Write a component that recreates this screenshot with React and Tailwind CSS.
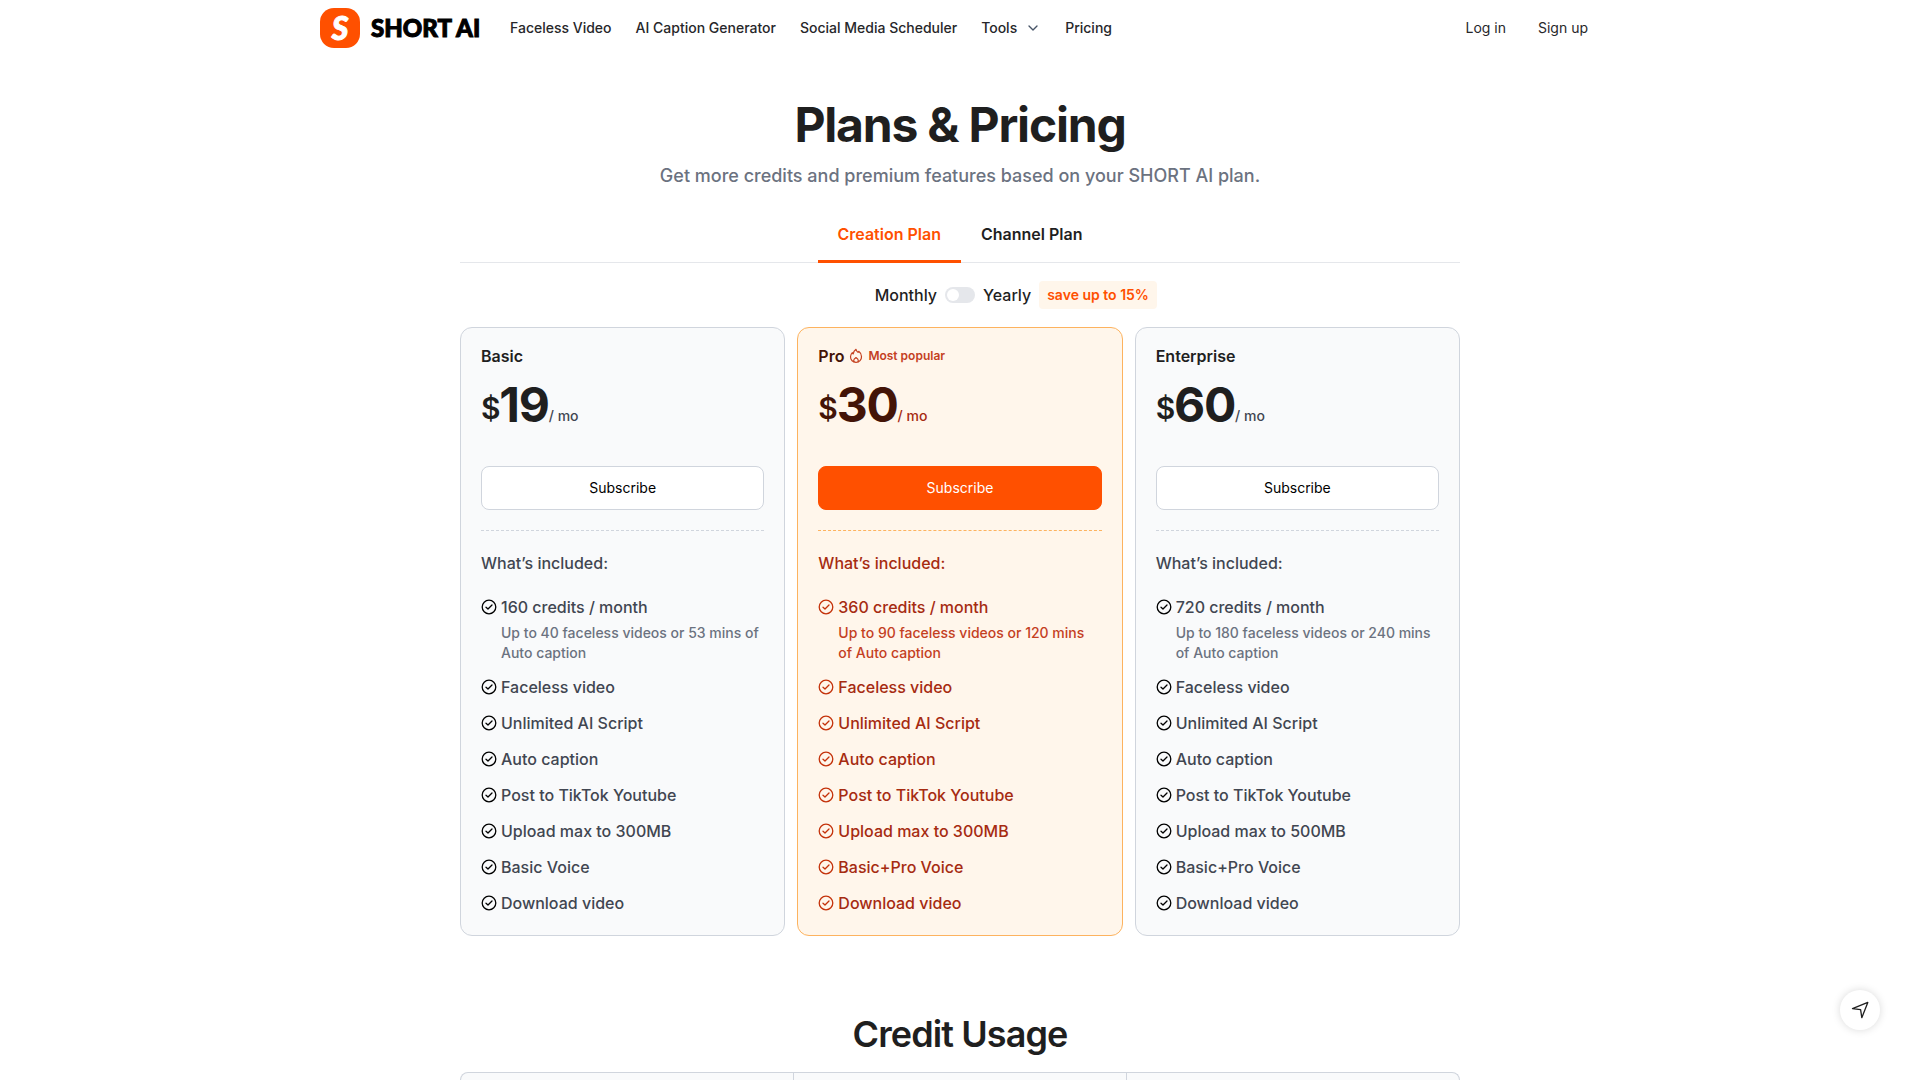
import { ChevronDown } from "lucide-react";

const navLinks = ["Faceless Video", "AI Caption Generator", "Social Media Scheduler"];

const plans = [
  {
    name: "Basic",
    price: 19,
    credits: "160 credits / month",
    note: "Up to 40 faceless videos or 53 mins of Auto caption",
    upload: "Upload max to 300MB",
    voice: "Basic Voice",
  },
  {
    name: "Pro",
    price: 30,
    popular: true,
    credits: "360 credits / month",
    note: "Up to 90 faceless videos or 120 mins of Auto caption",
    upload: "Upload max to 300MB",
    voice: "Basic+Pro Voice",
  },
  {
    name: "Enterprise",
    price: 60,
    credits: "720 credits / month",
    note: "Up to 180 faceless videos or 240 mins of Auto caption",
    upload: "Upload max to 500MB",
    voice: "Basic+Pro Voice",
  },
];

function CheckIcon({ className }) {
  return (
    <svg viewBox="0 0 16 16" fill="none" stroke="currentColor" className={className} aria-hidden="true">
      <circle cx="8" cy="8" r="6.8" strokeWidth="1.3" />
      <path d="M5 8.2 7 10l4-4" strokeWidth="1.3" strokeLinecap="round" strokeLinejoin="round" />
    </svg>
  );
}

function FlameIcon() {
  return (
    <svg
      viewBox="0 0 16 16"
      fill="none"
      stroke="currentColor"
      strokeWidth="1.2"
      strokeLinejoin="round"
      className="size-4"
      aria-hidden="true"
    >
      <path d="M8 1.300c.3 1.400 1 2.300 2 3.100.3-.4.6-.7.700-1.100 1.900 1.400 2.800 3.200 2.800 5.200A5.500 5.500 0 0 1 8 14.400 5.500 5.500 0 0 1 2.500 8.800c0-1.700.7-3.100 1.800-4.200.2.600.5 1 .9 1.300C5.500 4.200 6.400 2.400 8 1.300Z" />
      <path d="M6.300 14.100c-.4-.5-.6-1-.6-1.600 0-1.200.9-2.100 2.300-3 1.400.9 2.300 1.800 2.300 3 0 .6-.2 1.100-.6 1.600" />
    </svg>
  );
}

function Logo() {
  return (
    <a href="#home" className="flex items-center gap-[11px]">
      <span className="flex size-10 items-center justify-center rounded-[14px] bg-[#ff5000] font-['Lato',sans-serif] text-[32px] leading-10 font-black text-white italic [-webkit-text-stroke:1px_white]">
        S
      </span>
      <span className="w-[112px] font-['Lato',sans-serif] text-2xl font-black whitespace-nowrap text-black [-webkit-text-stroke:1px_black]">
        SHORT AI
      </span>
    </a>
  );
}

function Header() {
  return (
    <header className="mx-auto flex h-14 w-full max-w-[1280px] items-center text-sm text-[#27272a]">
      <Logo />
      <nav className="ml-[27px] flex items-center gap-6 font-medium">
        {navLinks.map((label) => (
          <a key={label} href="#features">
            {label}
          </a>
        ))}
        <button type="button" className="flex items-center gap-2">
          Tools
          <ChevronDown className="size-4 text-[#475467]" />
        </button>
        <a href="#pricing">Pricing</a>
      </nav>
      <div className="ml-auto flex items-center gap-8 pr-3">
        <a href="#login">Log in</a>
        <a href="#signup">Sign up</a>
      </div>
    </header>
  );
}

function PlanCard({ plan }) {
  const { popular } = plan;
  const body = popular ? "text-[#a62b11]" : "text-[#414651]";
  const line = popular ? "border-[#fdb35f]" : "border-[#d0d5dd]";
  const features = [
    "Faceless video",
    "Unlimited AI Script",
    "Auto caption",
    "Post to TikTok Youtube",
    plan.upload,
    plan.voice,
    "Download video",
  ];
  const check = popular ? "size-4 shrink-0 text-[#c4320a]" : "size-4 shrink-0 text-black";

  return (
    <article
      className={`rounded-xl border px-5 pt-4 pb-5 ${line} ${
        popular ? "bg-[#fff6eb] text-[#431407]" : "bg-[#f9fafb] text-[#1f1f1f]"
      }`}
    >
      <div className="flex items-center gap-1">
        <h2 className="text-base font-semibold">{plan.name}</h2>
        {popular && (
          <span className="flex items-center gap-1 text-xs font-semibold text-[#c4401f]">
            <FlameIcon />
            Most popular
          </span>
        )}
      </div>
      <p className="mt-3 flex items-end text-5xl leading-[50px] font-bold tracking-tight">
        <span className="text-3xl leading-11 font-semibold">$</span>
        {plan.price}
        <span className={`text-sm leading-7 font-medium tracking-normal ${body}`}>/ mo</span>
      </p>
      <button
        type="button"
        className={`mt-9 h-11 w-full rounded-lg border text-sm ${
          popular ? "border-[#ff5000] bg-[#ff5000] text-white" : "border-[#d0d5dd] bg-white text-black"
        }`}
      >
        Subscribe
      </button>
      <hr className={`my-5 border-t border-dashed ${line}`} />
      <p className={`font-medium ${body}`}>What’s included:</p>
      <ul className={`mt-5 space-y-3 font-medium ${body}`}>
        <li>
          <div className="flex items-center gap-1">
            <CheckIcon className={check} />
            {plan.credits}
          </div>
          <p className={`mt-1 pl-5 text-sm ${popular ? "text-[#c4401f]" : "text-[#6b7280]"}`}>{plan.note}</p>
        </li>
        {features.map((feature) => (
          <li key={feature} className="flex items-center gap-1">
            <CheckIcon className={check} />
            {feature}
          </li>
        ))}
      </ul>
    </article>
  );
}

export default function App() {
  return (
    <div className="min-h-screen bg-white font-['Inter',sans-serif] text-[#1f1f1f]">
      <Header />
      <main className="mx-auto w-full max-w-[1000px]">
        <h1 className="pt-10 text-center text-5xl leading-[58px] font-bold tracking-tight">Plans &amp; Pricing</h1>
        <p className="mt-1.5 text-center text-lg leading-8 font-medium text-[#6b7280]">
          Get more credits and premium features based on your SHORT AI plan.
        </p>

        <div role="tablist" className="mt-4 flex h-[55px] justify-center border-b border-[#e5e7eb] font-semibold">
          <button
            type="button"
            role="tab"
            aria-selected="true"
            className="-mb-px border-b-3 border-[#ff5000] px-5 text-[#ff5000]"
          >
            Creation Plan
          </button>
          <button type="button" role="tab" aria-selected="false" className="-mb-px border-b-3 border-transparent px-5">
            Channel Plan
          </button>
        </div>

        <div className="mt-[18px] grid grid-cols-[1fr_auto_1fr] items-center gap-2 font-medium">
          <span className="text-right">Monthly</span>
          <label className="flex h-4 w-[30px] rounded-full bg-[#e5e7eb] p-0.5">
            <input type="checkbox" role="switch" aria-label="Bill yearly" className="size-3 appearance-none rounded-full bg-white" />
          </label>
          <div className="flex items-center gap-2">
            Yearly
            <span className="rounded-sm bg-[#fff6eb] px-2 py-1 text-sm font-semibold text-[#ff5000]">save up to 15%</span>
          </div>
        </div>

        <section className="mt-[18px] grid grid-cols-3 gap-3">
          {plans.map((plan) => (
            <PlanCard key={plan.name} plan={plan} />
          ))}
        </section>

        <h2 className="mt-[76px] text-center text-4xl leading-[44px] font-semibold tracking-tight">Credit Usage</h2>
        <div className="mt-4 rounded-t-lg border border-b-0 border-[#d0d5dd] bg-[#f9fafb]">
          <table className="w-full table-fixed">
            <thead>
              <tr className="divide-x divide-[#d0d5dd]">
                <th className="h-[7px] p-0" />
                <th className="p-0" />
                <th className="p-0" />
              </tr>
            </thead>
          </table>
        </div>
      </main>

      <button
        type="button"
        aria-label="Back to top"
        className="fixed right-10 bottom-[50px] flex size-10 items-center justify-center rounded-full bg-white shadow-[0_0_8px_rgba(0,0,0,0.15)]"
      >
        <svg viewBox="0 0 20 20" fill="none" stroke="#1f1f1f" strokeWidth="1.3" strokeLinejoin="round" className="size-5">
          <path d="M2.500 8.700 17.800 2.400 11.800 17.700 10.600 9.700Z" />
        </svg>
      </button>
    </div>
  );
}
